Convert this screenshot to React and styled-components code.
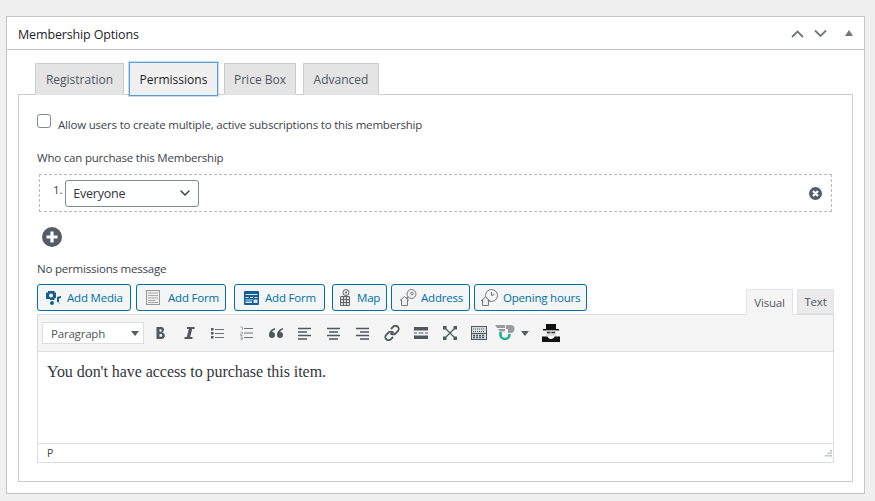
import React from 'react';
import styled, { createGlobalStyle } from 'styled-components';
import { ChevronDown } from 'lucide-react';

const UI_FONT = `"Open Sans", "Noto Sans", sans-serif`;

const GlobalStyle = createGlobalStyle`
  html, body { margin: 0; padding: 0; background: #f0f0f1; }
  body { font-family: ${UI_FONT}; color: #3c434a; letter-spacing: -.2px; }
  * { box-sizing: border-box; }
`;

const Page = styled.div`
  width: 875px;
  height: 501px;
  padding: 16px 10px 7px 6px;
  overflow: hidden;
`;

const Postbox = styled.section`
  height: 478px;
  background: #fff;
  border: 1px solid #c3c4c7;
  display: flex;
  flex-direction: column;
`;

const PostboxHeader = styled.header`
  height: 33px;
  flex: none;
  border-bottom: 1px solid #c3c4c7;
  display: flex;
  align-items: center;
  justify-content: space-between;
  padding: 0 11px 0 11px;
`;

const PostboxTitle = styled.h2`
  margin: 0;
  font-size: 12.5px;
  font-weight: 400;
  letter-spacing: -.15px;
  color: #1d2327;
  position: relative;
  top: 1px;
`;

const HeaderActions = styled.div`
  display: flex;
  align-items: center;
  gap: 10px;
  color: #646970;
`;

const Toggle = styled.span`
  width: 0;
  height: 0;
  margin-left: 8px;
  border-left: 4px solid transparent;
  border-right: 4px solid transparent;
  border-bottom: 6px solid #72777d;
`;

const PostboxBody = styled.div`
  flex: 1;
  display: flex;
  flex-direction: column;
  padding: 12px 11px 11px 11px;
`;

const TabRow = styled.nav`
  height: 33px;
  flex: none;
  display: flex;
  align-items: flex-start;
  padding-left: 17px;
  margin-bottom: -1px;
  position: relative;
  z-index: 1;
`;

const Tab = styled.button`
  height: ${p => (p.$active ? '34px' : '32px')};
  width: ${p => p.$w}px;
  margin-top: ${p => (p.$active ? '0' : '1px')};
  margin-left: ${p => p.$ml}px;
  padding: 0;
  font: ${p => (p.$active ? 500 : 400)} 12px ${UI_FONT};
  color: ${p => (p.$active ? '#1d2327' : '#50575e')};
  background: ${p => (p.$active ? '#f0f0f1' : '#e4e4e4')};
  border: 1px solid ${p => (p.$active ? '#5b9dd9' : '#ccc')};
  border-bottom-color: ${p => (p.$active ? '#5b9dd9' : 'transparent')};
  box-shadow: ${p => (p.$active ? '0 0 0 1px rgba(91,157,217,.35)' : 'none')};
`;

const Panel = styled.div`
  flex: 1;
  border: 1px solid #ccc;
  padding: 21px 18px 17px 18px;
  display: flex;
  flex-direction: column;
`;

const CheckRow = styled.label`
  display: flex;
  align-items: center;
  gap: 7px;
  font-size: 11.5px;
  height: 16px;
`;

const CheckBox = styled.span`
  width: 14px;
  height: 14px;
  flex: none;
  border: 1px solid #7e8993;
  border-radius: 3px;
  background: #fff;
  position: relative;
  top: -3px;
`;

const FieldLabel = styled.div`
  font-size: 11.5px;
  line-height: 16px;
  margin-top: ${p => p.$mt}px;
`;

const RuleBox = styled.div`
  height: 38px;
  margin: 8px 2px 0 2px;
  border: 1px dashed #bbb;
  display: flex;
  align-items: center;
  justify-content: space-between;
  padding: 0 9px 0 13px;
`;

const RuleLeft = styled.div`
  display: flex;
  align-items: center;
  gap: 3px;
`;

const RuleIndex = styled.span`
  font-size: 11.5px;
  position: relative;
  top: -4px;
`;

const Select = styled.div`
  width: 134px;
  height: 27px;
  border: 1px solid #7e8993;
  border-radius: 3px;
  display: flex;
  align-items: center;
  justify-content: space-between;
  padding: 0 5px 0 7px;
  font-size: 12.5px;
  color: #32373c;
`;

const AddRow = styled.div`
  height: 20px;
  margin: 15px 0 0 5px;
  display: flex;
`;

const MediaBar = styled.div`
  display: flex;
  align-items: flex-end;
  height: 31px;
  margin-top: 6px;
`;

const MediaButton = styled.button`
  width: ${p => p.$w}px;
  height: 27px;
  margin-left: ${p => p.$ml}px;
  margin-bottom: 3px;
  padding: 0 0 0 ${p => p.$pl ?? 7}px;
  display: flex;
  align-items: center;
  gap: ${p => p.$gap ?? 6}px;
  font: 400 11.5px ${UI_FONT};
  letter-spacing: -.2px;
  color: #0071a1;
  background: #f3f5f6;
  border: 1px solid #0071a1;
  border-radius: 3px;
`;

const EditorTabs = styled.div`
  margin-left: auto;
  display: flex;
  align-items: flex-end;
  gap: 4px;
`;

const EditorTab = styled.div`
  width: ${p => p.$w}px;
  height: ${p => (p.$active ? 26 : 25)}px;
  margin-bottom: ${p => (p.$active ? -1 : 0)}px;
  display: flex;
  align-items: center;
  justify-content: center;
  font-size: 11.5px;
  color: #50575e;
  background: ${p => (p.$active ? '#f5f5f5' : '#ebebeb')};
  border: 1px solid #e2e4e7;
  border-bottom-color: ${p => (p.$active ? '#f5f5f5' : '#e2e4e7')};
  position: relative;
  z-index: 1;
`;

const Editor = styled.div`
  height: 149px;
  border: 1px solid #ddd;
  display: flex;
  flex-direction: column;
`;

const Toolbar = styled.div`
  height: 37px;
  flex: none;
  background: #f5f5f5;
  border-bottom: 1px solid #ddd;
  box-shadow: 0 1px 1px rgba(0, 0, 0, .1);
  display: flex;
  align-items: center;
  padding-left: 4px;
`;

const FormatSelect = styled.div`
  width: 102px;
  height: 22px;
  background: #fff;
  border: 1px solid #ddd;
  display: flex;
  align-items: center;
  justify-content: space-between;
  padding: 0 4px 0 8px;
  font-size: 11.5px;
  color: #50575e;
  margin-right: 1px;
`;

const Caret = styled.span`
  width: 0;
  height: 0;
  border-left: 4px solid transparent;
  border-right: 4px solid transparent;
  border-top: 5px solid #555d66;
`;

const ToolButton = styled.span`
  width: ${p => p.$w ?? 29}px;
  height: 22px;
  flex: none;
  display: flex;
  align-items: center;
  justify-content: center;
  color: #50575e;
`;

const EditorContent = styled.div`
  flex: 1;
  padding: 10px 9px;
  background: #fff;
  font-family: "Liberation Serif", "DejaVu Serif", serif;
  font-size: 16px;
  line-height: 20px;
  letter-spacing: -.05px;
  color: #32373c;
`;

const StatusBar = styled.div`
  height: 19px;
  flex: none;
  border-top: 1px solid #ddd;
  font-size: 10.5px;
  color: #444;
  padding: 0 1px 0 9px;
  display: flex;
  align-items: center;
  justify-content: space-between;
`;

const Svg = ({ w = 16, h = 16, children }) => (
  <svg width={w} height={h} viewBox={`0 0 ${w} ${h}`} fill="none">{children}</svg>
);

const Chevron = ({ up }) => (
  <Svg w={13} h={9}>
    <path d={up ? 'M1 8l5.5-5.5L12 8' : 'M1 1.5L6.5 7 12 1.5'} stroke="#72777d" strokeWidth="1.8" />
  </Svg>
);

const MediaIcon = () => (
  <Svg w={17} h={16}>
    <path d="M1 2.5h2V1h6.500v1.500h1.500V8H9.500v2H5.200a3 3 0 0 1-.2-1H1z" fill="#135e96" />
    <circle cx="6" cy="5.500" r="2" fill="#f3f5f6" />
    <path d="M7 15a2 2 0 0 0 0-4c-1.200 0-2 .8-2 2s.8 2 2 2zM15 14a2 2 0 0 0-3-1.700V7l4-1v2l-2 .6V13" fill="#135e96" />
  </Svg>
);

const FormIconGray = () => (
  <Svg w={14} h={15}>
    <rect x=".5" y=".5" width="13" height="14" fill="#eee" stroke="#999" />
    <path d="M2 3h10M2 5.500h10M2 8h10M2 10.500h7M2 12.500h10" stroke="#aaa" />
  </Svg>
);

const FormIconBlue = () => (
  <Svg w={15} h={14}>
    <rect width="15" height="14" rx="1" fill="#135e96" />
    <path d="M1.500 3.500h12M1.500 6.500h3M6 6.500h3M10.500 6.500h3M1.500 9h7" stroke="#dbe7ef" strokeWidth="1.200" />
    <rect x="9.500" y="8.500" width="4" height="3.500" fill="#dbe7ef" />
    <rect x="1.500" y="10.500" width="6.500" height="1.500" fill="#dbe7ef" />
  </Svg>
);

const MapIcon = () => (
  <Svg w={14} h={17}>
    <path d="M.5 7.500h9v9h-9z" fill="#ddd" stroke="#666" />
    <path d="M.5 10.500h9M.5 13.500h9M3.500 7.500v9M6.500 7.500v9" stroke="#666" />
    <circle cx="6" cy="3.500" r="3" fill="#eee" stroke="#666" />
    <circle cx="6" cy="3.500" r="1" fill="#666" />
  </Svg>
);

const AddressIcon = () => (
  <Svg w={19} h={17}>
    <path d="M0 11.500l4.500-4 4.500 4M1.500 10.500v6h6v-6" stroke="#777" fill="#eee" />
    <circle cx="11.500" cy="5" r="4.500" fill="#f3f5f6" stroke="#777" />
    <circle cx="12" cy="4.500" r="1.300" stroke="#777" />
    <path d="M8 8l-1.500 1.500" stroke="#777" strokeWidth="1.500" />
  </Svg>
);

const HoursIcon = () => (
  <Svg w={19} h={17}>
    <circle cx="10.500" cy="6.500" r="6" fill="#f3f5f6" stroke="#777" />
    <path d="M10.500 3v3.500l3-1" stroke="#777" />
    <path d="M0 12l4.500-4 4.500 4M1.500 11v5.500h6V11" stroke="#777" fill="#eee" />
  </Svg>
);

const BoldIcon = () => (
  <Svg w={12} h={14}>
    <path transform="translate(1 0)" d="M1.500 1h4.700c3.500 0 3.800 4.800.8 5.500 4 .5 3.800 6.500-.5 6.500H1.500zM4.500 3.200v2.600h1.300c1.400 0 1.400-2.600 0-2.600zM4.500 8v2.800h1.700c1.500 0 1.500-2.800 0-2.800z" fill="#50575e" fillRule="evenodd" />
  </Svg>
);

const ItalicIcon = () => (
  <Svg w={12} h={14}>
    <path d="M4 1h7.500v2H9.200l-2 8H9.500v2H1.500v-2h2.300l2-8H4z" fill="#50575e" />
  </Svg>
);

const BulletIcon = () => (
  <Svg w={13} h={13}>
    <path d="M4 2.500h9M4 6.500h9M4 10.500h9" stroke="#6b7278" strokeWidth="1.200" />
    <path d="M0 1h2.500v2.500H0zM0 5h2.500v2.500H0zM0 9h2.500v2.500H0z" fill="#50575e" />
  </Svg>
);

const NumberIcon = () => (
  <Svg w={13} h={14}>
    <path d="M4 2.500h9M4 7h9M4 11.500h9" stroke="#6b7278" strokeWidth="1.200" />
    <path d="M.5 1h2v3M.5 6h2v2h-2v1.500h2M.5 11h2v2.500h-2M.5 12.200h2" stroke="#a7aaad" />
  </Svg>
);

const QuoteIcon = () => (
  <Svg w={14} h={11}>
    <path d="M6 0C2.500 1 0 3.500 0 7a3 3 0 1 0 3.200-3C3.500 3 4.500 2 6.200 1.500zM14 0c-3.500 1-6 3.500-6 7a3 3 0 1 0 3.200-3c.300-1 1.300-2 3-2.500z" fill="#50575e" />
  </Svg>
);

const AlignIcon = ({ kind }) => {
  const short = {
    left: ['M0 5h9', 'M0 12h9'],
    center: ['M2 5h9', 'M2 12h9'],
    right: ['M4 5h9', 'M4 12h9'],
  }[kind];
  return (
    <Svg w={13} h={13}>
      <path d={`M0 1.500h13 ${short[0]} M0 8.500h13 ${short[1]}`} stroke="#50575e" strokeWidth="1.400" />
    </Svg>
  );
};

const LinkIcon = () => (
  <Svg w={16} h={16}>
    <path d="M6.500 9.500l3-3M7 4l2-2a3 3 0 0 1 5 4l-2.500 2.500a3 3 0 0 1-3.500.5M9 12l-2 2a3 3 0 0 1-5-4l2.500-2.500A3 3 0 0 1 8 7" stroke="#50575e" strokeWidth="1.800" />
  </Svg>
);

const MoreIcon = () => (
  <Svg w={14} h={12}>
    <path d="M0 0h14v3.500H0zM0 8.500h14V12H0z" fill="#50575e" />
    <path d="M0 6h3M4.500 6h5M11 6h3" stroke="#50575e" />
  </Svg>
);

const ExpandIcon = () => (
  <Svg w={14} h={14}>
    <path d="M3 3l8 8M11 3l-8 8" stroke="#50575e" strokeWidth="1.200" />
    <path d="M0 0h3.500v3.500H0zM10.500 0H14v3.500h-3.500zM0 10.500h3.500V14H0zM10.500 10.500H14V14h-3.500z" fill="#50575e" />
  </Svg>
);

const KeyboardIcon = () => (
  <Svg w={16} h={14}>
    <rect x=".5" y=".5" width="15" height="13" fill="#ddd" stroke="#50575e" />
    <path d="M2 3h12M2 5.500h12" stroke="#50575e" strokeDasharray="1 1" />
    <path d="M1 7.500h14" stroke="#50575e" />
    <path d="M2 9.500h12M2 11.500h12" stroke="#50575e" strokeWidth="1.300" strokeDasharray="2 1" />
  </Svg>
);

const PluginIcon = () => (
  <Svg w={20} h={16}>
    <path d="M0 0h10v3H2zM3 4h7v2.500H5zM11 0h4.500a4 4 0 0 1 0 8H13V4h-2z" fill="#9a9da0" />
    <path d="M5.500 7v2.500a4.500 4.500 0 0 0 9 0V9" stroke="#1bb18c" strokeWidth="2.600" />
  </Svg>
);

const HatIcon = () => (
  <Svg w={18} h={18}>
    <path d="M4 0h10v5h3v1.500H1V5h3z" fill="#111" />
    <path d="M4 6.500h10V12H4z" fill="#ddd" />
    <path d="M5 8.500h3.500M9.500 8.500H13" stroke="#333" strokeWidth="1.400" />
    <path d="M0 18v-5.500h5.500c.5 1.500 1.500 2.500 3.500 2.500s3-1 3.500-2.500H18V18z" fill="#111" />
  </Svg>
);

const CircleIcon = ({ size, plus }) => (
  <Svg w={size} h={size}>
    <circle cx={size / 2} cy={size / 2} r={size / 2} fill="#555d66" />
    {plus ? (
      <path d="M10 4.500v11M4.500 10h11" stroke="#fff" strokeWidth="3.200" />
    ) : (
      <path d="M4 4l5 5M9 4l-5 5" stroke="#fff" strokeWidth="2.200" />
    )}
  </Svg>
);

const ResizeGrip = () => (
  <Svg w={9} h={9}>
    <path d="M7 1h2v1.500H7zM4.500 3.500h2V5h-2zM7 3.500h2V5H7zM2 6h2v1.500H2zM4.500 6h2v1.500h-2zM7 6h2v1.500H7z" fill="#b5bcc2" />
  </Svg>
);

const tabs = [
  { label: 'Registration', w: 89, ml: 0 },
  { label: 'Permissions', w: 89, ml: 5, active: true },
  { label: 'Price Box', w: 72, ml: 6 },
  { label: 'Advanced', w: 76, ml: 7 },
];

const mediaButtons = [
  { label: 'Add Media', w: 94, ml: 0, icon: <MediaIcon />, gap: 5, pl: 7 },
  { label: 'Add Form', w: 90, ml: 5, icon: <FormIconGray />, gap: 8, pl: 9 },
  { label: 'Add Form', w: 91, ml: 8, icon: <FormIconBlue />, gap: 6, pl: 9 },
  { label: 'Map', w: 55, ml: 7, icon: <MapIcon />, gap: 3, pl: 7 },
  { label: 'Address', w: 79, ml: 4, icon: <AddressIcon />, gap: 2, pl: 8 },
  { label: 'Opening hours', w: 113, ml: 4, icon: <HoursIcon />, gap: 3, pl: 6 },
];

const tools = [
  <BoldIcon />, <ItalicIcon />, <BulletIcon />, <NumberIcon />, <QuoteIcon />,
  <AlignIcon kind="left" />, <AlignIcon kind="center" />, <AlignIcon kind="right" />,
  <LinkIcon />, <MoreIcon />, <ExpandIcon />, <KeyboardIcon />,
];

export default function App() {
  return (
    <Page>
      <GlobalStyle />
      <Postbox>
        <PostboxHeader>
          <PostboxTitle>Membership Options</PostboxTitle>
          <HeaderActions>
            <Chevron up />
            <Chevron />
            <Toggle />
          </HeaderActions>
        </PostboxHeader>
        <PostboxBody>
          <TabRow>
            {tabs.map(t => (
              <Tab key={t.label} $w={t.w} $ml={t.ml} $active={t.active}>{t.label}</Tab>
            ))}
          </TabRow>
          <Panel>
            <CheckRow>
              <CheckBox />
              Allow users to create multiple, active subscriptions to this membership
            </CheckRow>
            <FieldLabel $mt={18}>Who can purchase this Membership</FieldLabel>
            <RuleBox>
              <RuleLeft>
                <RuleIndex>1.</RuleIndex>
                <Select>
                  Everyone
                  <ChevronDown size={16} strokeWidth={2} color="#32373c" />
                </Select>
              </RuleLeft>
              <CircleIcon size={13} />
            </RuleBox>
            <AddRow><CircleIcon size={20} plus /></AddRow>
            <FieldLabel $mt={14}>No permissions message</FieldLabel>
            <MediaBar>
              {mediaButtons.map((b, i) => (
                <MediaButton key={i} $w={b.w} $ml={b.ml} $gap={b.gap} $pl={b.pl}>
                  {b.icon}
                  {b.label}
                </MediaButton>
              ))}
              <EditorTabs>
                <EditorTab $w={47} $active>Visual</EditorTab>
                <EditorTab $w={37}>Text</EditorTab>
              </EditorTabs>
            </MediaBar>
            <Editor>
              <Toolbar>
                <FormatSelect>Paragraph<Caret /></FormatSelect>
                {tools.map((icon, i) => <ToolButton key={i}>{icon}</ToolButton>)}
                <ToolButton $w={23}><PluginIcon /></ToolButton>
                <ToolButton $w={17}><Caret /></ToolButton>
                <ToolButton $w={35}><HatIcon /></ToolButton>
              </Toolbar>
              <EditorContent>You don't have access to purchase this item.</EditorContent>
              <StatusBar>
                P
                <ResizeGrip />
              </StatusBar>
            </Editor>
          </Panel>
        </PostboxBody>
      </Postbox>
    </Page>
  );
}
